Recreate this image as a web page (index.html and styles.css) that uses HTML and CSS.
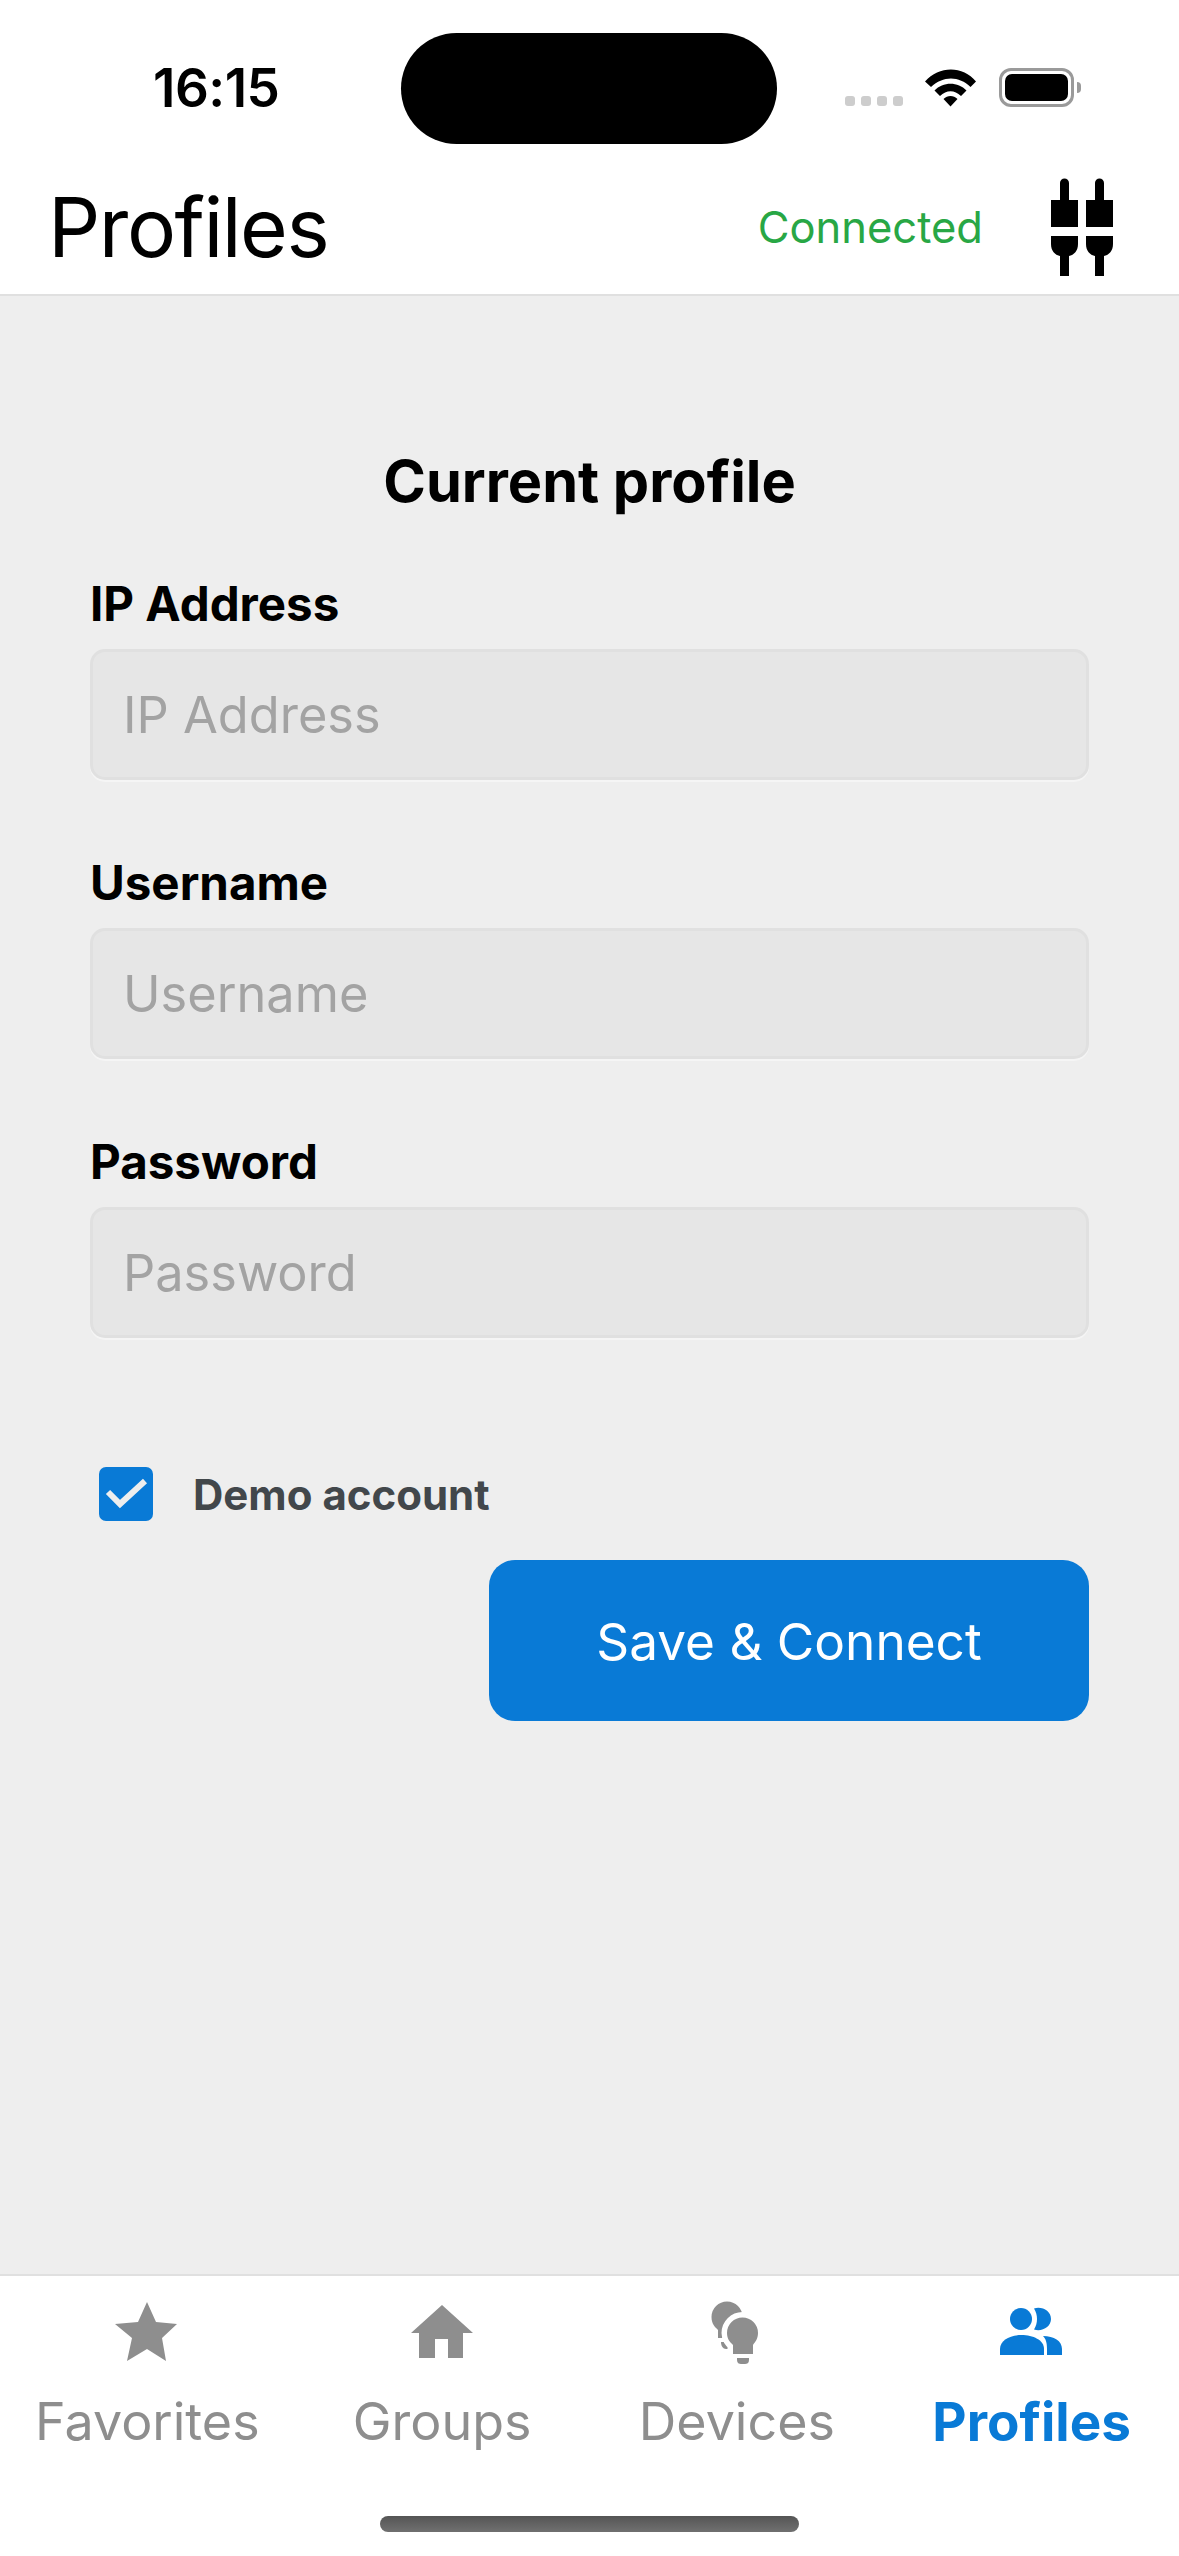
FILE: index.html
```html
<!DOCTYPE html>
<html lang="en">
<head>
  <meta charset="UTF-8">
  <meta name="viewport" content="width=device-width, initial-scale=1.0">
  <title>Profiles</title>
  <link rel="stylesheet" href="styles.css">
</head>
<body>
  <div class="app">
    <div class="status-bar">
      <span class="clock">16:15</span>
      <div class="status-icons">
        <div class="signal"><i></i><i></i><i></i><i></i></div>
        <svg class="wifi" width="52" height="38" viewBox="0 0 52 38">
          <path d="M0 12.500C14-3.500 38-3.500 51 12.500L45.500 18C34 6.500 18 6.500 6 18Z"/>
          <path d="M9.500 21.500C18 12.500 33 12.500 41.500 21.500L36 27C29.500 20.500 21.500 20.500 15 27Z"/>
          <path d="M18.500 30C22.500 26 28.500 26 32.500 30L25.500 37.500Z"/>
        </svg>
        <div class="battery"><div class="battery-fill"></div></div>
        <div class="battery-cap"></div>
      </div>
      <div class="island"></div>
    </div>

    <header class="app-header">
      <h1 class="page-title">Profiles</h1>
      <div class="connection">
        <span class="connection-text">Connected</span>
        <svg class="plug" width="62" height="98" viewBox="0 0 62 98">
          <path d="M9 22V5a4.500 4.500 0 0 1 9 0V22H27V49H0V22Z"/>
          <path d="M44 22V5a4.500 4.500 0 0 1 9 0V22H62V49H35V22Z"/>
          <path d="M0 58H27V66C27 73 23 77 18 78V98H9V78C4 77 0 73 0 66Z"/>
          <path d="M35 58H62V66C62 73 58 77 53 78V98H44V78C39 77 35 73 35 66Z"/>
        </svg>
      </div>
    </header>

    <main class="content">
      <h2 class="form-title">Current profile</h2>
      <div class="field">
        <label class="field-label">IP Address</label>
        <div class="field-input">IP Address</div>
      </div>
      <div class="field">
        <label class="field-label">Username</label>
        <div class="field-input">Username</div>
      </div>
      <div class="field">
        <label class="field-label">Password</label>
        <div class="field-input">Password</div>
      </div>
      <div class="demo-row">
        <span class="checkbox">
          <svg width="54" height="54" viewBox="0 0 54 54"><path d="M9 25L21 37L46 14" fill="none" stroke="#eeeeee" stroke-width="6"/></svg>
        </span>
        <span class="demo-label">Demo account</span>
      </div>
      <div class="actions">
        <button class="save-btn">Save &amp; Connect</button>
      </div>
    </main>

    <nav class="tab-bar">
      <div class="tab">
        <svg class="tab-icon" width="64" height="60" viewBox="0 0 64 60"><path d="M32 0L41 20L62 22L47 36L51 59L32 47L12 59L17 36L0 22L23 20Z"/></svg>
        <span class="tab-label">Favorites</span>
      </div>
      <div class="tab">
        <svg class="tab-icon" width="64" height="60" viewBox="0 0 64 60"><path d="M32 3L63 31H53V56H38V37H25V56H9V31H1Z"/></svg>
        <span class="tab-label">Groups</span>
      </div>
      <div class="tab">
        <svg class="tab-icon" width="64" height="64" viewBox="0 0 64 64">
          <path d="M22 1.500A15.500 15.500 0 0 1 37.500 17C37.500 24 34 27 32 30V38H13V30C10 27 6.500 24 6.500 17A15.500 15.500 0 0 1 22 1.500Z"/>
          <path d="M16 42H24V49H21C18 49 16 46 16 42Z"/>
          <path class="bulb-front" d="M37.500 17.500A15.500 15.500 0 0 1 53 33C53 39 50 42 48 45V54H28V45C25 42 22 39 22 33A15.500 15.500 0 0 1 37.500 17.500Z"/>
          <path d="M32 58H44V60C44 63 42 64 40 64H36C34 64 32 63 32 60Z"/>
        </svg>
        <span class="tab-label">Devices</span>
      </div>
      <div class="tab tab-active">
        <svg class="tab-icon" width="64" height="60" viewBox="0 0 64 60">
          <circle cx="21" cy="17" r="11"/>
          <path d="M0 53V47C0 38 10 33 21.500 33C33 33 44 38 44 47V53Z"/>
          <path d="M34 6.500C42 4 51 9 51 17C51 25 42 30 34 27.500C38 21 38 13 34 6.500Z"/>
          <path d="M43 34C54 34 62 39 62 47V53H47V47C47 41 46 37 43 34Z"/>
        </svg>
        <span class="tab-label">Profiles</span>
      </div>
      <div class="home-indicator"></div>
    </nav>
  </div>
</body>
</html>
```

FILE: styles.css
```css
body {
  margin: 0;
  font-family: Inter, "Liberation Sans", sans-serif;
  color: #000;
  background: #fff;
}

.app {
  display: flex;
  flex-direction: column;
  width: 1179px;
  height: 2556px;
  overflow: hidden;
}

/* status bar */
.status-bar {
  position: relative;
  display: flex;
  justify-content: space-between;
  align-items: center;
  height: 160px;
  padding: 16px 0 0 153px;
  box-sizing: border-box;
}

.clock {
  font-size: 53px;
  font-weight: 600;
  letter-spacing: -0.5px;
}

.island {
  position: absolute;
  left: 401px;
  top: 33px;
  width: 376px;
  height: 111px;
  border-radius: 56px;
  background: #000;
}

.status-icons {
  display: flex;
  align-items: center;
  margin-right: 98px;
  margin-top: -1px;
}

.signal {
  display: flex;
  gap: 6px;
  margin-right: 22px;
  margin-top: 27px;
}

.signal i {
  width: 10px;
  height: 10px;
  border-radius: 3px;
  background: #cdcdcd;
}

.wifi {
  margin-right: 22px;
}

.battery {
  width: 75px;
  height: 39px;
  box-sizing: border-box;
  border: 3px solid #9a9a9a;
  border-radius: 12px;
  padding: 3px;
}

.battery-fill {
  height: 100%;
  border-radius: 7px;
  background: #000;
}

.battery-cap {
  width: 4px;
  height: 11px;
  margin-left: 3px;
  border-radius: 0 4px 4px 0;
  background: #9a9a9a;
}

/* header */
.app-header {
  display: flex;
  justify-content: space-between;
  align-items: center;
  height: 136px;
  box-sizing: border-box;
  padding: 0 66px 0 48px;
  border-bottom: 2px solid #e0e0e0;
}

.page-title {
  margin: 0;
  font-size: 82px;
  font-weight: 400;
  letter-spacing: -1.5px;
}

.connection {
  display: flex;
  align-items: center;
  gap: 68px;
}

.connection-text {
  font-size: 43.500px;
  color: #28a745;
}

/* form */
.content {
  flex: 1;
  background: #eeeeee;
  padding: 0 90px;
}

.form-title {
  margin: 150px 0 60px;
  font-size: 57.700px;
  line-height: 70px;
  font-weight: 700;
  text-align: center;
}

.field {
  margin-bottom: 75px;
}

.field-label {
  display: block;
  font-size: 47.500px;
  line-height: 56px;
  font-weight: 700;
  margin-bottom: 17px;
}

.field-input {
  height: 131px;
  box-sizing: border-box;
  padding-left: 30px;
  border: 3px solid #e0e0e0;
  border-radius: 15px;
  background: #e6e6e6;
  box-shadow: 0 2px 0 #f5f5f5;
  font-size: 50.500px;
  line-height: 125px;
  color: #a3a3a3;
}

.demo-row {
  display: flex;
  align-items: center;
  padding-left: 9px;
  margin-top: 129px;
}

.checkbox {
  display: block;
  width: 54px;
  height: 54px;
  border-radius: 7px;
  background: #097ad6;
}

.demo-label {
  margin-left: 40px;
  font-size: 42px;
  font-weight: 700;
  color: #42474b;
}

.actions {
  display: flex;
  justify-content: flex-end;
  margin-top: 39px;
}

.save-btn {
  width: 600px;
  height: 161px;
  border: none;
  border-radius: 26px;
  background: #097ad6;
  color: #fff;
  font-family: inherit;
  font-size: 51.300px;
}

/* bottom tabs */
.tab-bar {
  position: relative;
  display: grid;
  grid-template-columns: repeat(4, 1fr);
  height: 282px;
  box-sizing: border-box;
  border-top: 2px solid #e0e0e0;
  background: #fff;
}

.tab {
  display: flex;
  flex-direction: column;
  align-items: center;
  padding-top: 24px;
  color: #8e8e8e;
  fill: #8e8e8e;
}

.tab-icon {
  height: 64px;
}

.bulb-front {
  stroke: #fff;
  stroke-width: 11px;
  paint-order: stroke;
}

.tab-label {
  margin-top: 27px;
  font-size: 52px;
  line-height: 62px;
}

.tab-active {
  color: #097ad6;
  fill: #097ad6;
}

.tab-active .tab-label {
  font-size: 53px;
  font-weight: 700;
}

.home-indicator {
  position: absolute;
  left: 380px;
  bottom: 24px;
  width: 419px;
  height: 16px;
  border-radius: 8px;
  background: linear-gradient(#555, #707070);
}
```
